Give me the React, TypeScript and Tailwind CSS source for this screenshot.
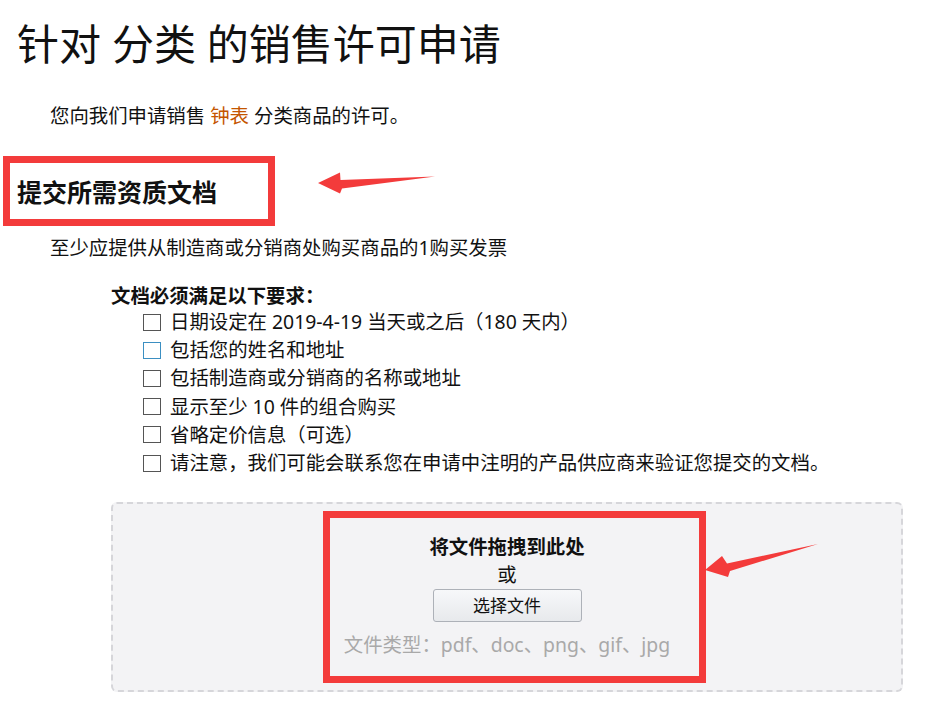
const requirements = [
  { text: "日期设定在 2019-4-19 当天或之后（180 天内）" },
  { text: "包括您的姓名和地址", focus: true },
  { text: "包括制造商或分销商的名称或地址" },
  { text: "显示至少 10 件的组合购买" },
  { text: "省略定价信息（可选）" },
  { text: "请注意，我们可能会联系您在申请中注明的产品供应商来验证您提交的文档。" },
];

function Arrows() {
  // screenshot annotations drawn over the page
  return (
    <svg
      className="pointer-events-none absolute inset-0"
      width="941"
      height="701"
      viewBox="0 0 941 701"
    >
      <polygon
        points="318,183 340,172.5 340.5,180 435,176.5 342,188.5 340,193.5"
        fill="#f33b3b"
      />
      <polygon
        points="705,570 722,556 727,563.5 818,544 730,571 728,577"
        fill="#f33b3b"
      />
    </svg>
  );
}

export default function App() {
  return (
    <div className="relative h-[701px] w-[941px] overflow-hidden bg-white font-[family-name:'Noto_Sans','Noto_Sans_CJK_SC',sans-serif] text-[#111]">
      {/* Title */}
      <h1 className="pl-[17px] pt-[20px] text-[42px] leading-[48px] font-normal">
        针对 分类 的销售许可申请
      </h1>
      <p className="mt-[34px] pl-[50px] text-[19.4px] leading-[28px]">
        您向我们申请销售 <span className="text-[#c45500]">钟表</span> 分类商品的许可。
      </p>

      {/* Section heading */}
      <div className="ml-[3px] mt-[26px] flex h-[70px] w-[272px] items-center border-[7px] border-[#f33b3b] pl-[7px]">
        <h2 className="mt-[2px] text-[25px] font-bold leading-none">提交所需资质文档</h2>
      </div>

      <p className="mt-[8px] pl-[50px] text-[19.4px] leading-[28px]">
        至少应提供从制造商或分销商处购买商品的1购买发票
      </p>

      {/* Requirements */}
      <div className="ml-[111px] mt-[22px] text-[19.4px]">
        <p className="font-bold leading-[24px]">文档必须满足以下要求：</p>
        <ul className="pl-[32px]">
          {requirements.map((item) => (
            <li key={item.text} className="flex h-[28.2px] items-center gap-[9px]">
              <span
                className={`h-[17px] w-[18px] shrink-0 border bg-white ${
                  item.focus ? "border-[#3b8fc2]" : "border-[#555]"
                }`}
              />
              <span className="whitespace-nowrap leading-[28px]">{item.text}</span>
            </li>
          ))}
        </ul>
      </div>

      {/* Drop zone */}
      <div className="relative ml-[111px] mt-[25px] flex h-[190px] w-[792px] flex-col items-center rounded-[6px] border-2 border-dashed border-[#d6d6da] bg-[#f3f3f5] pt-[29px] text-[19.4px]">
        <p className="font-bold leading-[28px]">将文件拖拽到此处</p>
        <p className="leading-[28px]">或</p>
        <button className="h-[33px] w-[149px] rounded-[3px] border border-[#adb1b8] bg-linear-to-b from-[#f7f8fa] to-[#e7e9ec] text-[17px] leading-none text-[#111]">
          选择文件
        </button>
        <p className="mt-[9px] leading-[28px] text-[#a9a9a9]">文件类型：pdf、doc、png、gif、jpg</p>

        <div className="pointer-events-none absolute left-[210px] top-[7px] h-[172px] w-[383px] border-[7px] border-[#f33b3b]" />
      </div>

      <Arrows />
    </div>
  );
}
